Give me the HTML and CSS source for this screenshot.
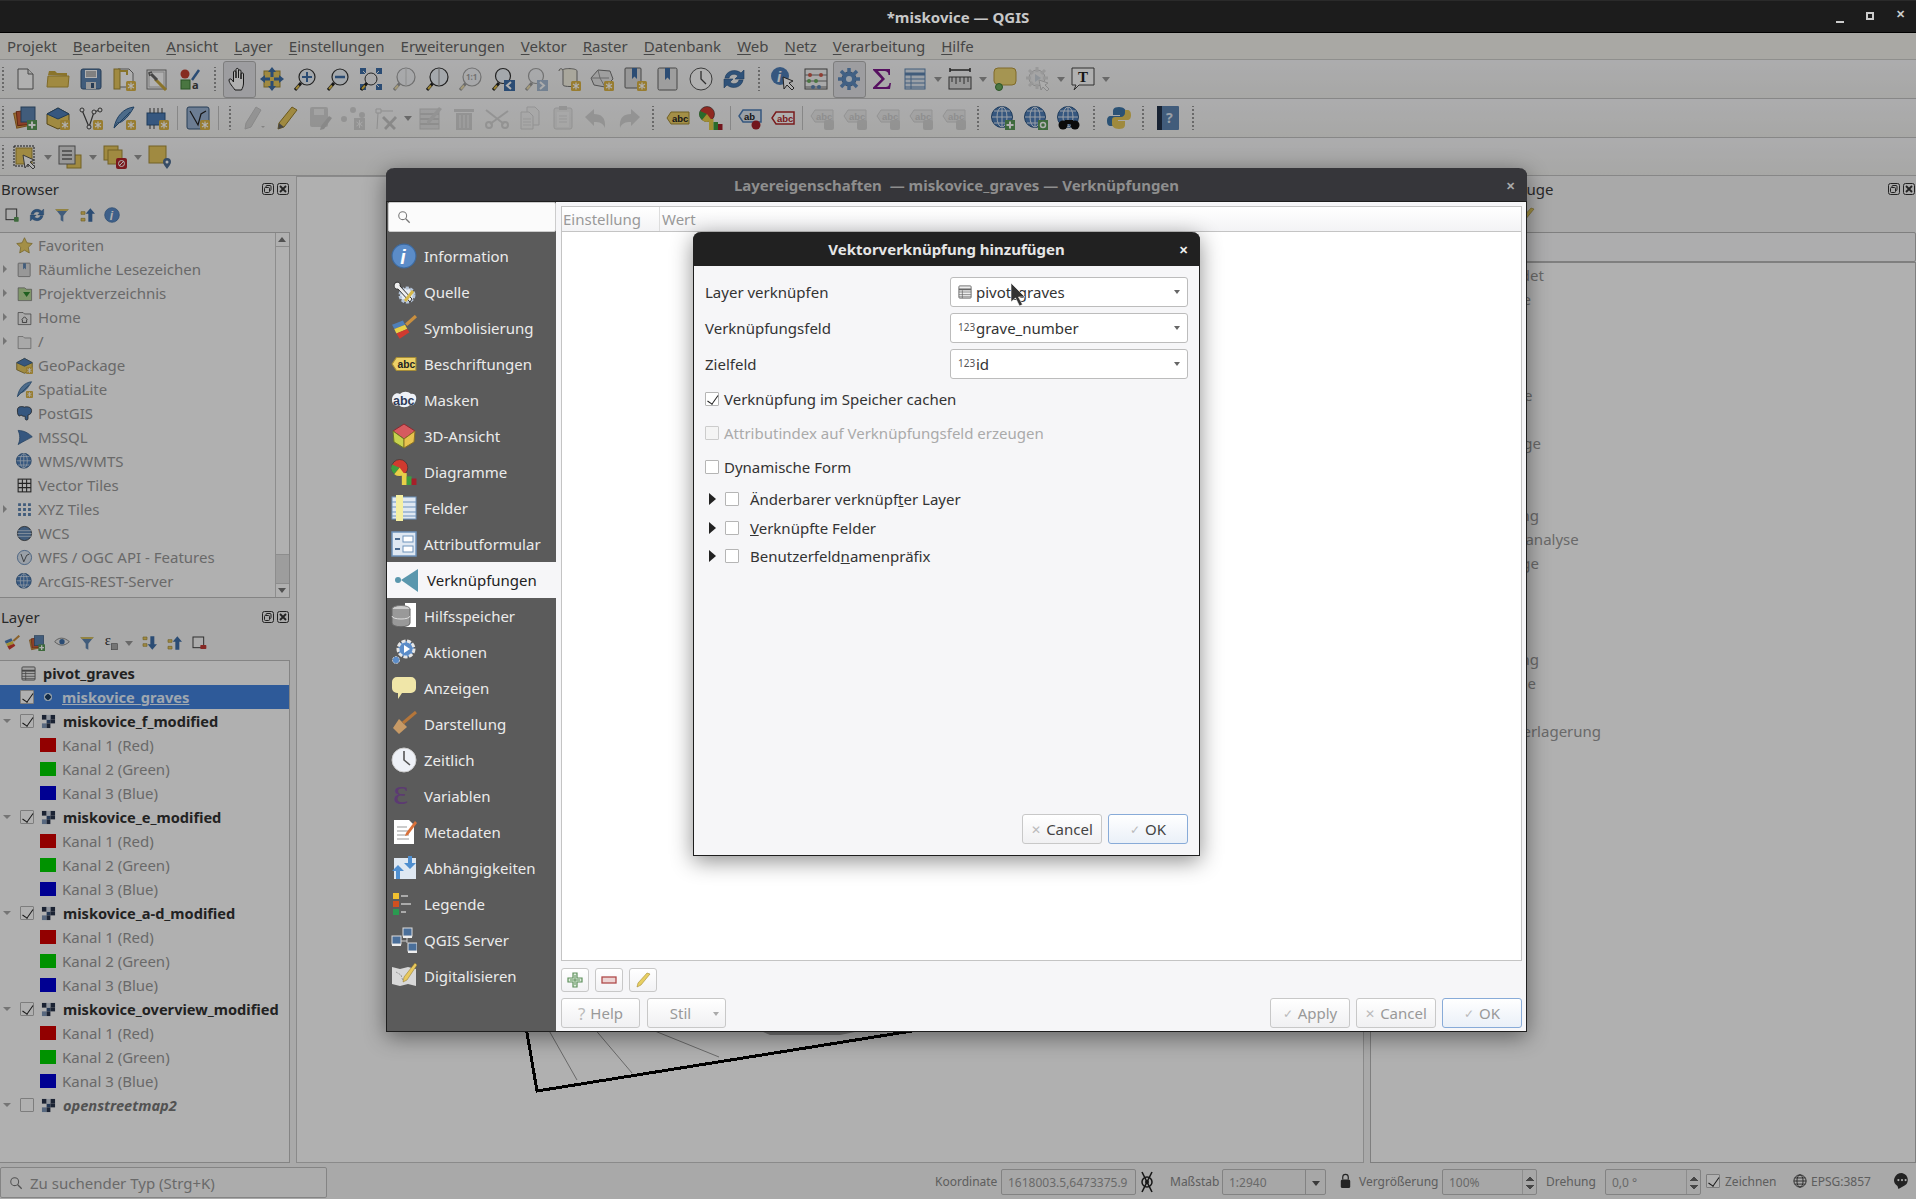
FILE: index.html
```html
<!DOCTYPE html>
<html lang="de">
<head>
    <meta charset="UTF-8">
    <title>*miskovice — QGIS</title>
    <link rel="stylesheet" href="styles.css">
</head>
<body>
<svg class="defs" width="0" height="0">
    <defs>
        <g id="badge"><rect x="14" y="14" width="10" height="10" rx="1.5" fill="#dcb546"/><path d="M19 15.5v7M16 17l6 4M22 17l-6 4" stroke="#fff" stroke-width="1.2"/></g>
        <g id="handle"><path d="M2 23l6-7" stroke="#222" stroke-width="3"/><path d="M3 22l3-3.5" stroke="#e2c04e" stroke-width="2"/></g>
        <symbol id="i-new" viewBox="0 0 24 24"><path d="M5 2h10l5 5v15H5z" fill="#fff" stroke="#666"/><path d="M15 2v5h5" fill="#eee" stroke="#666"/></symbol>
        <symbol id="i-open" viewBox="0 0 24 24"><path d="M2 8l1-4h6l2 2h10v3z" fill="#c9a83f"/><path d="M1 20l1-11h21l-1 11z" fill="#e8c95f" stroke="#b89a3c"/></symbol>
        <symbol id="i-save" viewBox="0 0 24 24"><rect x="2" y="2" width="20" height="20" rx="2" fill="#5f86b3" stroke="#39587c"/><rect x="6" y="3" width="12" height="8" fill="#fff"/><path d="M7 5h10M7 7h10M7 9h10" stroke="#777"/><rect x="7" y="15" width="10" height="7" fill="#ddd"/><rect x="12" y="16" width="3" height="5" fill="#39587c"/></symbol>
        <symbol id="i-layout" viewBox="0 0 24 24"><path d="M6 2h11l4 4v14H6z" fill="#fff" stroke="#777"/><rect x="2" y="2" width="6" height="20" fill="#e8c95f" stroke="#a58c36"/><path d="M8 4h7v4" fill="none" stroke="#c6a93f" stroke-width="2"/><use href="#badge"/></symbol>
        <symbol id="i-manager" viewBox="0 0 24 24"><rect x="2" y="3" width="19" height="19" fill="#fff" stroke="#777"/><rect x="4" y="5" width="15" height="15" fill="none" stroke="#bbb"/><path d="M10 12l11 11" stroke="#c9a83f" stroke-width="3"/><path d="M6 7l6 6" stroke="#666" stroke-width="3"/><path d="M7 5l-3 1 1 3" fill="none" stroke="#666" stroke-width="1.500"/></symbol>
        <symbol id="i-style" viewBox="0 0 24 24"><circle cx="7" cy="7" r="4.5" fill="#c2402f"/><path d="M14 13l7-10" stroke="#3f6fa8" stroke-width="2.5"/><rect x="3" y="13" width="9" height="9" fill="#6cab5f" stroke="#3c7a36"/><text x="14" y="22" class="svg-t" font-size="11" fill="#444">a</text></symbol>
        <symbol id="i-pan" viewBox="0 0 24 24"><path d="M8 23c-2-3-6-7-6-10 0-1.500 2-1.500 3 0l1.500 2V5c0-1.500 2.500-1.500 2.500 0v6V2.500c0-1.500 2.500-1.500 2.500 0V11V4c0-1.500 2.500-1.500 2.500 0v8V7c0-1.500 2.500-1.500 2.500 0v9c0 3-1 5-2 7z" fill="#fff" stroke="#222"/></symbol>
        <symbol id="i-panmap" viewBox="0 0 24 24"><rect x="4" y="4" width="16" height="16" fill="#e8c95f" stroke="#a58c36"/><path d="M12 0l4 5h-2.500v5h-3V5H8zM12 24l4-5h-2.500v-5h-3v5H8zM0 12l5-4v2.500h5v3H5V16zM24 12l-5-4v2.500h-5v3h5V16z" fill="#3f6fa8"/></symbol>
        <symbol id="i-zoomin" viewBox="0 0 24 24"><use href="#handle"/><circle cx="14" cy="10" r="8" fill="#eef3f9" stroke="#333" stroke-width="1.200"/><path d="M14 5v10M9 10h10" stroke="#3f6fa8" stroke-width="2"/></symbol>
        <symbol id="i-zoomout" viewBox="0 0 24 24"><use href="#handle"/><circle cx="14" cy="10" r="8" fill="#eef3f9" stroke="#333" stroke-width="1.200"/><path d="M9 10h10" stroke="#3f6fa8" stroke-width="2.500"/></symbol>
        <symbol id="i-zoomfull" viewBox="0 0 24 24"><rect x="1" y="1" width="22" height="22" fill="#3f6fa8"/><rect x="7" y="0" width="10" height="24" fill="#f5f5f7"/><rect x="0" y="7" width="24" height="10" fill="#f5f5f7"/><path d="M4 4l6 6M20 4l-6 6M20 20l-6-6" stroke="#f5f5f7"/><use href="#handle"/><circle cx="12" cy="12" r="6" fill="none" stroke="#333"/></symbol>
        <symbol id="i-zoomplain" viewBox="0 0 24 24"><use href="#handle"/><circle cx="14" cy="10" r="9" fill="#eef3f9" stroke="#333" stroke-width="1.200"/><path d="M14 1v18" stroke="#999"/></symbol>
        <symbol id="i-zoom11" viewBox="0 0 24 24"><use href="#handle"/><circle cx="14" cy="10" r="9" fill="#eef3f9" stroke="#333" stroke-width="1.200"/><text x="8" y="13" class="svg-t" font-size="8" fill="#333">1:1</text></symbol>
        <symbol id="i-zoomlast" viewBox="0 0 24 24"><use href="#handle"/><circle cx="12" cy="9" r="7.500" fill="#eef3f9" stroke="#333" stroke-width="1.200"/><rect x="13" y="13" width="11" height="11" fill="#3f6fa8"/><path d="M20 15l-4 3.500 4 3.500" fill="none" stroke="#fff" stroke-width="2"/></symbol>
        <symbol id="i-zoomnext" viewBox="0 0 24 24"><use href="#handle"/><circle cx="12" cy="9" r="7.500" fill="#eef3f9" stroke="#333" stroke-width="1.200"/><rect x="13" y="13" width="11" height="11" fill="#3f6fa8"/><path d="M16 15l4 3.500-4 3.500" fill="none" stroke="#fff" stroke-width="2"/></symbol>
        <symbol id="i-newmap" viewBox="0 0 24 24"><path d="M2 4c0-3 4-3 4 0v14c0 2 14 2 14 0V4c0-3-14-3-14-1" fill="#f5f2e2" stroke="#777"/><use href="#badge"/></symbol>
        <symbol id="i-new3d" viewBox="0 0 24 24"><path d="M1 11l7-8 12 1 3 8-8 8-11-2z" fill="#e6e6e6" stroke="#777"/><path d="M8 3l2 8-9 0M10 11l9 0M10 11l5 9" stroke="#999" fill="none"/><use href="#badge"/></symbol>
        <symbol id="i-booknew" viewBox="0 0 24 24"><rect x="2" y="1" width="16" height="20" rx="1" fill="#ddd" stroke="#666"/><path d="M9 1h5v11l-2.500-2.500L9 12z" fill="#3f6fa8"/><use href="#badge"/></symbol>
        <symbol id="i-book" viewBox="0 0 24 24"><rect x="2" y="1" width="19" height="22" rx="1.500" fill="#e5e5e5" stroke="#666"/><path d="M9 1h5v12l-2.500-2.500L9 13z" fill="#3f6fa8"/></symbol>
        <symbol id="i-clock" viewBox="0 0 24 24"><circle cx="12" cy="12" r="11" fill="#fff" stroke="#555"/><path d="M12 4v8l5 5" fill="none" stroke="#444" stroke-width="1.300"/></symbol>
        <symbol id="i-refresh" viewBox="0 0 24 24"><path d="M3 11C4 4 13 1 19 6l3-3v9h-9l3-3c-3-3-8-2-9 2zM21 13c-1 7-10 10-16 5l-3 3v-9h9l-3 3c3 3 8 2 9-2z" fill="#4477b0" stroke="#2d5684" stroke-width=".6"/></symbol>
        <symbol id="i-identify" viewBox="0 0 24 24"><circle cx="9" cy="9" r="9" fill="#4f7fb8"/><text x="6" y="15" class="svg-b" font-size="15" fill="#fff" font-style="italic">i</text><path d="M12 10l1 12 3-4 5 5 2-2-5-5 4-2z" fill="#fff" stroke="#333"/></symbol>
        <symbol id="i-abacus" viewBox="0 0 24 24"><rect x="1" y="2" width="22" height="20" fill="#f5f5f5" stroke="#555"/><path d="M1 8h22M1 14h22M1 20h22" stroke="#777"/><g fill="#d05b4a"><circle cx="6" cy="8" r="2"/><circle cx="17" cy="8" r="2"/></g><g fill="#6cab5f"><circle cx="5" cy="14" r="2"/><circle cx="12" cy="14" r="2"/></g><g fill="#5f86b3"><circle cx="9" cy="20" r="2"/><circle cx="15" cy="20" r="2"/></g></symbol>
        <symbol id="i-gear" viewBox="0 0 24 24"><circle cx="12" cy="12" r="7" fill="#5f8cc0" stroke="#3a628f"/><path d="M12 1v22M1 12h22M4 4l16 16M20 4L4 20" stroke="#5f8cc0" stroke-width="3.500"/><circle cx="12" cy="12" r="6" fill="#5f8cc0"/><circle cx="12" cy="12" r="3" fill="#dfe8f2"/></symbol>
        <symbol id="i-sigma" viewBox="0 0 24 24"><path d="M3 2h17v6h-1.500c0-3-2-4-4-4H8l7 8-8 8h8c3 0 4-1 4.500-4H21l-1 6H3v-1.500l8.500-8.500L3 3z" fill="#7d1a8c"/></symbol>
        <symbol id="i-table" viewBox="0 0 24 24"><rect x="2" y="2" width="20" height="20" fill="#dfe8f2" stroke="#5f86b3"/><path d="M2 7h20" stroke="#5f86b3" stroke-width="3"/><path d="M2 12h20M2 16h20M2 20h20M8 8v14" stroke="#5f86b3"/></symbol>
        <symbol id="i-ruler" viewBox="0 0 24 24"><path d="M2 3h20M2 1v4M22 1v4" stroke="#333" stroke-width="1.500" fill="none"/><rect x="1" y="10" width="22" height="12" fill="#ddd" stroke="#444"/><path d="M4 10v5M8 10v7M12 10v5M16 10v7M20 10v5" stroke="#444"/></symbol>
        <symbol id="i-balloon" viewBox="0 0 24 24"><path d="M5 1h14a4 4 0 014 4v9a4 4 0 01-4 4H9l-4 4v-4.500A4 4 0 011 14V5a4 4 0 014-4z" fill="#f0d878" stroke="#b89a3c"/><circle cx="6" cy="20" r="3.500" fill="#6cab5f" stroke="#3c7a36"/></symbol>
        <symbol id="i-gearplay" viewBox="0 0 24 24"><circle cx="11" cy="11" r="8" fill="#ddd" stroke="#888"/><path d="M11 0v22M0 11h22M3 3l16 16M19 3L3 19" stroke="#bbb" stroke-width="3"/><circle cx="11" cy="11" r="6" fill="#e5e5e5"/><path d="M9 7l6 4-6 4z" fill="#9ab"/><path d="M13 13l2 10 2-3 4 4 2-2-4-4 3-2z" fill="#fff" stroke="#888"/></symbol>
        <symbol id="i-textbox" viewBox="0 0 24 24"><path d="M1 1h22v17H8l-5 5 2-5H1z" fill="#fff" stroke="#444"/><text x="7" y="15" class="svg-s" font-size="15" fill="#222">T</text></symbol>
        <symbol id="i-addlayers" viewBox="0 0 24 24"><rect x="2" y="6" width="12" height="15" fill="#dca24e" stroke="#a86c23" transform="rotate(-12 8 13)"/><rect x="4" y="5" width="12" height="14" fill="#cc5f3b" stroke="#8c3a1c" transform="rotate(-6 10 12)"/><rect x="8" y="1" width="14" height="15" fill="#5f86b3" stroke="#39587c"/><rect x="14" y="14" width="10" height="10" fill="#5a9a57"/><path d="M19 15.500v7M15.500 19h7" stroke="#fff" stroke-width="2"/></symbol>
        <symbol id="i-gpkg" viewBox="0 0 24 24"><path d="M1 8l11-6 11 6v10l-11 5-11-5z" fill="#e8c95f" stroke="#7a6420"/><path d="M1 8l11 5 11-5-11-6z" fill="#4f7fb8" stroke="#2d5684"/><use href="#badge"/></symbol>
        <symbol id="i-vnodes" viewBox="0 0 24 24"><path d="M3 4l7 17 5-15 6-2" fill="none" stroke="#444" stroke-width="1.200"/><g fill="#fff" stroke="#444"><circle cx="3" cy="4" r="2"/><circle cx="10" cy="21" r="2"/><circle cx="15" cy="6" r="2"/><circle cx="21" cy="4" r="2"/></g><use href="#badge"/></symbol>
        <symbol id="i-feather" viewBox="0 0 24 24"><path d="M22 1C12 2 4 10 2 22c2-1 2-3 3-5 6 0 12-7 17-16z" fill="#6f9bc9" stroke="#2f5d8c"/><path d="M2 22L18 6" stroke="#2f5d8c"/><use href="#badge"/></symbol>
        <symbol id="i-chip" viewBox="0 0 24 24"><rect x="2" y="7" width="18" height="12" fill="#4f7fb8" stroke="#2d5684"/><path d="M5 2v5M9 2v5M13 2v5M17 2v5M5 19v4M9 19v4" stroke="#444"/><use href="#badge"/></symbol>
        <symbol id="i-vbox" viewBox="0 0 24 24"><rect x="1" y="1" width="22" height="22" rx="2" fill="#9db6d6" stroke="#39587c"/><path d="M4 5l8 14 3-11 5-3" fill="none" stroke="#222" stroke-width="1.200"/><use href="#badge"/></symbol>
        <symbol id="i-pencil" viewBox="0 0 24 24"><path d="M17 1l5 3L9 21l-6 2 1-6z" fill="#e8c95f" stroke="#9a802c"/><path d="M3 23l1-6 5 4z" fill="#666"/></symbol>
        <symbol id="i-pencilgray" viewBox="0 0 24 24"><path d="M14 1l5 3-10 17-6 2 1-6z" fill="#aaa" stroke="#888"/><path d="M19 20l2 2 2-2z" fill="#777"/></symbol>
        <symbol id="i-savegray" viewBox="0 0 24 24"><rect x="2" y="1" width="18" height="20" rx="2" fill="#aaa"/><rect x="6" y="3" width="10" height="6" fill="#ddd"/><path d="M21 10l3 2-8 11-4 1 1-4z" fill="#888"/></symbol>
        <symbol id="i-nodes" viewBox="0 0 24 24"><circle cx="3" cy="13" r="3" fill="#aaa"/><circle cx="12" cy="4" r="3" fill="#aaa"/><circle cx="21" cy="9" r="3" fill="#aaa"/><rect x="13" y="12" width="11" height="12" fill="#aaa"/><path d="M18.500 14v8M15.500 16l6 4M21.500 16l-6 4" stroke="#eee"/></symbol>
        <symbol id="i-tools" viewBox="0 0 24 24"><path d="M2 3h5v4H2zM7 5h12M4 7l-1 16" fill="none" stroke="#999"/><path d="M10 22l11-12 2 2-11 12M10 10l12 12-2 2-12-12" fill="#888"/></symbol>
        <symbol id="i-tableedit" viewBox="0 0 24 24"><rect x="1" y="3" width="19" height="20" fill="#ccc" stroke="#999"/><path d="M1 8h19M1 13h19M1 18h19" stroke="#999" stroke-width="2"/><path d="M20 1l3 2-12 14-3 1 0-3z" fill="#aaa"/></symbol>
        <symbol id="i-trash" viewBox="0 0 24 24"><path d="M2 3h20v3H2zM4 7h16v17H4z" fill="#aaa"/><path d="M8 9v13M12 9v13M16 9v13" stroke="#eee"/></symbol>
        <symbol id="i-scissors" viewBox="0 0 24 24"><path d="M1 4l18 14M23 5L5 18" stroke="#aaa" stroke-width="2"/><circle cx="4" cy="19" r="3" fill="none" stroke="#aaa" stroke-width="2"/><circle cx="20" cy="19" r="3" fill="none" stroke="#aaa" stroke-width="2"/></symbol>
        <symbol id="i-copy" viewBox="0 0 24 24"><path d="M9 1h8l4 4v14H9z" fill="#eee" stroke="#aaa"/><path d="M3 6h8l4 4v13H3z" fill="#eee" stroke="#aaa"/><path d="M5 13h8M5 16h8M5 19h8" stroke="#bbb"/></symbol>
        <symbol id="i-paste" viewBox="0 0 24 24"><rect x="3" y="2" width="18" height="21" rx="2" fill="#ddd" stroke="#aaa"/><rect x="8" y="0" width="8" height="4" fill="#aaa"/><rect x="6" y="6" width="12" height="15" fill="#eee"/><path d="M8 10h8M8 13h8M8 16h8" stroke="#bbb"/></symbol>
        <symbol id="i-undo" viewBox="0 0 24 24"><path d="M1 11l9-8v5c7 0 12 3 11 14-2-5-5-6-11-6v4z" fill="#aaa"/></symbol>
        <symbol id="i-redo" viewBox="0 0 24 24"><path d="M23 11l-9-8v5C7 8 2 11 3 22c2-5 5-6 11-6v4z" fill="#aaa"/></symbol>
        <symbol id="i-abc" viewBox="0 0 24 24"><path d="M5 6h18v12H5l-4-6z" fill="#ecd067" stroke="#a58c36"/><text x="6" y="15.500" class="svg-b" font-size="9.500" fill="#222">abc</text></symbol>
        <symbol id="i-abcred" viewBox="0 0 24 24"><path d="M5 6h18v12H5l-4-6z" fill="#fff" stroke="#b0282a" stroke-width="1.500"/><text x="6" y="15.500" class="svg-b" font-size="9.500" fill="#b0282a">abc</text></symbol>
        <symbol id="i-abpin" viewBox="0 0 24 24"><path d="M5 4h18v12H5l-4-6z" fill="#dfe8f2" stroke="#4f7fb8" stroke-width="1.500"/><text x="6" y="13.500" class="svg-b" font-size="9.500" fill="#222">ab</text><circle cx="18" cy="19" r="4.500" fill="#a5202a"/></symbol>
        <symbol id="i-abcgray" viewBox="0 0 24 24"><path d="M5 4h18v12H5l-4-6z" fill="#ddd" stroke="#aaa"/><text x="6" y="13.500" class="svg-b" font-size="9.500" fill="#999">abc</text><rect x="14" y="14" width="10" height="10" rx="2" fill="#aaa"/></symbol>
        <symbol id="i-pie" viewBox="0 0 24 24"><circle cx="8" cy="8" r="7.500" fill="#d03a2f" stroke="#333" stroke-width=".6"/><path d="M8 8L1 5a7.500 7.500 0 002 9z" fill="#3d9c3f"/><path d="M8 8l-5 6a7.500 7.500 0 009.500 0z" fill="#e8d048"/><rect x="10" y="13" width="4.500" height="11" fill="#e8d048"/><rect x="14.500" y="16" width="4.500" height="8" fill="#3d9c3f"/><rect x="19" y="18" width="4.500" height="6" fill="#a5202a"/></symbol>
        <symbol id="i-globe" viewBox="0 0 24 24"><circle cx="11" cy="11" r="10.500" fill="#4f7fb8" stroke="#2d5684"/><path d="M11 1v20M1 11h20M3 5h16M3 17h16" stroke="#dfe8f2"/><ellipse cx="11" cy="11" rx="5" ry="10" fill="none" stroke="#dfe8f2"/></symbol>
        <symbol id="i-globeplus" viewBox="0 0 24 24"><use href="#i-globe"/><rect x="14" y="14" width="10" height="10" fill="#5a9a57"/><path d="M19 15.500v7M15.500 19h7" stroke="#fff" stroke-width="2"/></symbol>
        <symbol id="i-globeq" viewBox="0 0 24 24"><use href="#i-globe"/><rect x="14" y="14" width="10" height="10" fill="#5a9a57"/><circle cx="19" cy="19" r="2.500" fill="none" stroke="#fff" stroke-width="1.500"/></symbol>
        <symbol id="i-globebin" viewBox="0 0 24 24"><use href="#i-globe"/><circle cx="6" cy="19" r="4.500" fill="#111"/><circle cx="18" cy="19" r="4.500" fill="#111"/><rect x="8" y="14" width="8" height="4" fill="#111"/></symbol>
        <symbol id="i-python" viewBox="0 0 24 24"><path d="M12 1C6 1 6 4 6 6v3h7v1H4c-3 0-4 2-4 5s1 5 4 5h2v-3c0-2 2-4 4-4h6c2 0 3-1 3-3V6c0-2-2-5-7-5z" fill="#3f78aa"/><path d="M12 23c6 0 6-3 6-5v-3h-7v-1h9c3 0 4-2 4-5s-1-5-4-5h-2v3c0 2-2 4-4 4H8c-2 0-3 1-3 3v4c0 2 2 5 7 5z" fill="#e6c85a"/></symbol>
        <symbol id="i-helpbook" viewBox="0 0 24 24"><rect x="1" y="0" width="22" height="24" rx="1" fill="#5f86b3"/><rect x="1" y="0" width="5" height="24" fill="#24344a"/><text x="10" y="17" class="svg-t" font-size="14" fill="#dfe8f2">?</text></symbol>
        <symbol id="i-select" viewBox="0 0 24 24"><rect x="3" y="3" width="16" height="16" fill="#e8c95f" stroke="#a58c36"/><rect x="1" y="1" width="20" height="20" fill="none" stroke="#222" stroke-dasharray="2 1"/><path d="M10 10l2 13 3-4 5 5 2-2-5-5 4-2z" fill="#fff" stroke="#555"/></symbol>
        <symbol id="i-formsel" viewBox="0 0 24 24"><rect x="9" y="10" width="14" height="13" fill="#e8c95f" stroke="#a58c36"/><rect x="1" y="1" width="16" height="18" fill="#ddd" stroke="#666"/><path d="M4 6h10M4 10h10M4 14h10" stroke="#666" stroke-width="1.500"/></symbol>
        <symbol id="i-deselect" viewBox="0 0 24 24"><rect x="1" y="1" width="14" height="14" fill="#e8c95f" stroke="#a58c36"/><rect x="5" y="5" width="14" height="14" fill="#e8c95f" stroke="#a58c36"/><rect x="13" y="13" width="11" height="11" rx="2" fill="#b3242a"/><circle cx="18.500" cy="18.500" r="3" fill="none" stroke="#fff"/><path d="M16 21l5-5" stroke="#fff"/></symbol>
        <symbol id="i-locate" viewBox="0 0 24 24"><rect x="1" y="1" width="17" height="17" fill="#e8c95f" stroke="#a58c36"/><path d="M19 24c-2-3-4-5-4-7a4 4 0 018 0c0 2-2 4-4 7z" fill="#4f6f94"/><circle cx="19" cy="17" r="1.500" fill="#fff"/></symbol>
        <symbol id="i-addgroup" viewBox="0 0 24 24"><rect x="3" y="3" width="16" height="16" fill="#fff" fill-opacity=".3" stroke="#444" stroke-width="1.500"/><rect x="15" y="15" width="7" height="7" rx="1" fill="#5a9a57"/></symbol>
        <symbol id="i-removegroup" viewBox="0 0 24 24"><rect x="3" y="3" width="16" height="16" fill="#fff" fill-opacity=".3" stroke="#444" stroke-width="1.500"/><rect x="14" y="15" width="9" height="6" rx="1" fill="#c23a35"/></symbol>
        <symbol id="i-filter" viewBox="0 0 24 24"><path d="M2 3h20l-8 10v9l-4-2v-7z" fill="#5f86b3"/><path d="M2 3h20l-2 3H4z" fill="#d6c062"/></symbol>
        <symbol id="i-collapse" viewBox="0 0 24 24"><path d="M3 7h6v4H3zM3 17h6v4H3z" fill="#e8c95f" stroke="#a58c36"/><path d="M17 2l7 8h-4v12h-6V10h-4z" fill="#3f6fa8"/></symbol>
        <symbol id="i-expand" viewBox="0 0 24 24"><path d="M3 3h6v4H3zM3 13h6v4H3z" fill="#e8c95f" stroke="#a58c36"/><path d="M17 22l7-8h-4V2h-6v12h-4z" fill="#3f6fa8"/></symbol>
        <symbol id="i-info" viewBox="0 0 24 24"><circle cx="12" cy="12" r="11" fill="#5b8cc8" stroke="#3d6a9f"/><text x="8.500" y="19" class="svg-b" font-size="18" fill="#fff" font-style="italic">i</text></symbol>
        <symbol id="i-brushmix" viewBox="0 0 24 24"><path d="M1 9l10-4 2 4-10 4z" fill="#4f7fb8"/><path d="M3 13l10-4 2 4-10 4z" fill="#e8d048"/><path d="M5 17l10-4 2 3-9 6z" fill="#d03a2f"/><path d="M14 9l9-8" stroke="#c98f3f" stroke-width="3"/></symbol>
        <symbol id="i-eye" viewBox="0 0 24 24"><path d="M1 10c6-7 14-7 22 0-7 7-15 7-22 0z" fill="#eee" stroke="#555"/><circle cx="12" cy="10" r="4" fill="#3f6fa8"/></symbol>
        <symbol id="i-epsilonbox" viewBox="0 0 24 24"><text x="1" y="15" class="svg-s" font-size="22" fill="#333">ε</text><rect x="11" y="13" width="9" height="9" fill="#aaa" stroke="#666"/></symbol>
        <symbol id="i-star" viewBox="0 0 24 24"><path d="M12 1l3.400 7.200 7.600 1-5.600 5.400 1.400 7.900-6.800-3.800-6.800 3.800 1.400-7.900L1 9.200l7.600-1z" fill="#ecd067" stroke="#a58c36"/></symbol>
        <symbol id="i-bmark" viewBox="0 0 24 24"><rect x="3" y="3" width="17" height="19" rx="1" fill="#ddd" stroke="#777"/><path d="M10 3h4v9l-2-2-2 2z" fill="#5f86b3"/></symbol>
        <symbol id="i-folderfav" viewBox="0 0 24 24"><path d="M3 4h9l3 2h7v16H3z" fill="#b9d99a" stroke="#777"/><path d="M10 10h10l-5 7z" fill="#2f8c2f"/></symbol>
        <symbol id="i-home" viewBox="0 0 24 24"><path d="M3 5h7l2 2h9v15H3z" fill="#f5f5f5" stroke="#555"/><path d="M8 15l4-4 4 4M9 15v4h6v-4" fill="none" stroke="#222"/></symbol>
        <symbol id="i-folder" viewBox="0 0 24 24"><path d="M3 5h7l2 2h9v15H3z" fill="#f5f5f5" stroke="#888"/></symbol>
        <symbol id="i-pg" viewBox="0 0 24 24"><path d="M2 7c0-6 8-5 10-4 2-1 10-1 10 5 0 5-4 6-5 6v5c0 3-4 3-4 0v-3c-2 0-4 0-6-2-1 2-3 2-4 0-1-2-1-4-1-7z" fill="#4f7fb8" stroke="#222"/></symbol>
        <symbol id="i-mssql" viewBox="0 0 24 24"><path d="M3 22c3-6 3-14 0-20 8 0 15 4 20 9-5 3-12 6-20 11z" fill="#4f7fb8" stroke="#2d5684"/></symbol>
        <symbol id="i-grid" viewBox="0 0 24 24"><rect x="3" y="3" width="18" height="18" fill="#fff" stroke="#333" stroke-width="1.500"/><path d="M3 9h18M3 15h18M9 3v18M15 3v18" stroke="#333" stroke-width="1.500"/></symbol>
        <symbol id="i-dots" viewBox="0 0 24 24"><path d="M3 3h4v4H3zM10 3h4v4h-4zM17 3h4v4h-4zM3 10h4v4H3zM10 10h4v4h-4zM17 10h4v4h-4zM3 17h4v4H3zM10 17h4v4h-4zM17 17h4v4h-4z" fill="#5f86b3"/></symbol>
        <symbol id="i-wcs" viewBox="0 0 24 24"><circle cx="12" cy="12" r="10" fill="#5f86b3" stroke="#222"/><path d="M2 8h20M2 12h20M2 16h20" stroke="#dfe8f2"/></symbol>
        <symbol id="i-wfs" viewBox="0 0 24 24"><circle cx="12" cy="12" r="10" fill="#dfe8f2" stroke="#3f6fa8"/><path d="M7 7l4 11 4-9 4-2" fill="none" stroke="#222"/></symbol>
        <symbol id="i-raster" viewBox="0 0 16 16"><rect x="1" y="1" width="5" height="5" fill="#28344a"/><rect x="10" y="1" width="5" height="5" fill="#28344a"/><rect x="6" y="6" width="4" height="4" fill="#33507a"/><rect x="1" y="10" width="5" height="5" fill="#7f97b8"/><rect x="6" y="1" width="4" height="5" fill="#cfd8e4"/><rect x="10" y="6" width="5" height="4" fill="#28344a"/><rect x="6" y="10" width="4" height="5" fill="#28344a"/></symbol>
        <symbol id="i-attrtable" viewBox="0 0 16 16"><rect x="1" y="1" width="14" height="14" rx="1" fill="#eee" stroke="#666"/><path d="M1 5h14" stroke="#666" stroke-width="2"/><path d="M1 8h14M1 11h14M1 13.500h14M5 6v9" stroke="#666" stroke-width=".8"/></symbol>
        <symbol id="i-wrench" viewBox="0 0 26 26"><circle cx="16" cy="16" r="7" fill="#e8edf4" stroke="#b5c5da" stroke-width="3" stroke-dasharray="3 1.500"/><path d="M4 4c3-2 6 0 5 3l12 13-2 3L7 10C4 11 2 7 4 4z" fill="#eee" stroke="#333"/><path d="M14 22L22 12" stroke="#d6b84a" stroke-width="3"/></symbol>
        <symbol id="i-masks" viewBox="0 0 26 26"><path d="M1 13c0-6 5-8 8-6 3-3 8-3 11 0 4-1 6 3 5 6s-2 6-6 5c-3 3-9 3-11 0-4 2-7-1-7-5z" fill="#eef1f7"/><text x="2" y="18" class="svg-b" font-size="12.500" fill="#2d3b57">abc</text></symbol>
        <symbol id="i-cube" viewBox="0 0 26 26"><path d="M13 1l11 7-11 8L2 8z" fill="#d65a5f" stroke="#8c2a2f"/><path d="M2 8l11 8v9L3 19z" fill="#c7d24f" stroke="#6c7426"/><path d="M24 8l-11 8v9l10-6z" fill="#e8c24e" stroke="#8a7224"/></symbol>
        <symbol id="i-fields" viewBox="0 0 26 26"><rect x="1" y="2" width="24" height="22" fill="#dfe8f2" stroke="#6f93bb"/><path d="M1 7h24M1 12h24M1 17h24M1 21h24" stroke="#6f93bb"/><rect x="5" y="0" width="7" height="26" fill="#f5efa0"/></symbol>
        <symbol id="i-form" viewBox="0 0 26 26"><rect x="1" y="1" width="24" height="24" fill="#dfe8f2" stroke="#6f93bb" stroke-width="1.500"/><rect x="12" y="5" width="10" height="6" fill="#fff" stroke="#6f93bb"/><rect x="12" y="15" width="10" height="6" fill="#fff" stroke="#6f93bb"/><path d="M4 8h5M4 18h5" stroke="#4a6a8f" stroke-width="2"/></symbol>
        <symbol id="i-join" viewBox="0 0 26 26"><circle cx="5" cy="13" r="3" fill="#5a97ad"/><path d="M8 13L25 2v23z" fill="#5a97ad"/></symbol>
        <symbol id="i-aux" viewBox="0 0 26 26"><rect x="14" y="0" width="11" height="24" fill="#fff"/><ellipse cx="10" cy="6" rx="9" ry="3.500" fill="#ccc" stroke="#777"/><path d="M1 6v14c0 5 18 5 18 0V6" fill="#999" stroke="#666"/><path d="M1 13c0 4 18 4 18 0" fill="none" stroke="#ddd"/></symbol>
        <symbol id="i-actions" viewBox="0 0 26 26"><circle cx="15" cy="10" r="8" fill="#5b8cc8" stroke="#e6e6e6" stroke-width="3" stroke-dasharray="4 1.500"/><path d="M13 6l6 4-6 4z" fill="#fff"/><circle cx="5" cy="21" r="3.500" fill="#5b8cc8" stroke="#ccc" stroke-dasharray="2 1"/></symbol>
        <symbol id="i-tip" viewBox="0 0 26 26"><path d="M6 2h14a5 5 0 015 5v6a5 5 0 01-5 5h-9l-4 6v-6H6a5 5 0 01-5-5V7a5 5 0 015-5z" fill="#f0e6a8"/></symbol>
        <symbol id="i-brush" viewBox="0 0 26 26"><path d="M8 8l8 8-8 7-6-6z" fill="#c79a66"/><path d="M12 12L25 1" stroke="#b5763a" stroke-width="3"/></symbol>
        <symbol id="i-clocklight" viewBox="0 0 26 26"><circle cx="13" cy="13" r="12" fill="#eef1f7" stroke="#ccc"/><path d="M13 4v9l6 5" fill="none" stroke="#555" stroke-width="1.600"/></symbol>
        <symbol id="i-variables" viewBox="0 0 26 26"><text x="2" y="21" class="svg-s" font-size="36" fill="#5c3a72">ε</text></symbol>
        <symbol id="i-meta" viewBox="0 0 26 26"><path d="M3 1h15l5 5v19H3z" fill="#fff"/><path d="M6 8h10M6 12h12M6 16h12M6 20h12" stroke="#999"/><path d="M24 2l2 2-9 12-3 1 1-3z" fill="#d9713a"/></symbol>
        <symbol id="i-deps" viewBox="0 0 26 26"><rect x="3" y="3" width="22" height="21" fill="#dfe8f2"/><path d="M1 16l6-6 6 6h-4v8H5v-8zM25 8l-6 6-6-6h4V1h4v7z" fill="#4f8fd0"/></symbol>
        <symbol id="i-legend" viewBox="0 0 26 26"><rect x="2" y="2" width="6" height="6" fill="#f0c030"/><rect x="2" y="10" width="6" height="6" fill="#d0501f"/><rect x="2" y="18" width="6" height="6" fill="#2a9a50"/><path d="M10 5h7M10 13h10M10 21h5" stroke="#aaa" stroke-width="2"/></symbol>
        <symbol id="i-server" viewBox="0 0 26 26"><g fill="#4a6f9a" stroke="#ddd"><rect x="1" y="9" width="9" height="8"/><rect x="12" y="1" width="9" height="8"/><rect x="17" y="16" width="9" height="8"/></g><path d="M1 18h9M12 10h9M17 25h9" stroke="#eee" stroke-width="2"/><path d="M16 11v5M10 14h6" stroke="#ccc"/></symbol>
        <symbol id="i-digit" viewBox="0 0 26 26"><path d="M1 4l8 2 8-2 8 2v17l-8-2-8 2-8-2z" fill="#d8d8d8"/><path d="M5 9l5 3 2 6" stroke="#999" fill="none" stroke-dasharray="2 1"/><path d="M24 0l2 2-10 15-4 2 1-5z" fill="#e8c95f" stroke="#8a7224" stroke-width=".5"/></symbol>
        <symbol id="i-search" viewBox="0 0 16 16"><circle cx="6.500" cy="6.500" r="4.500" fill="none" stroke="#777" stroke-width="1.200"/><path d="M10 10l4.500 4.500" stroke="#777" stroke-width="1.500"/></symbol>
        <symbol id="i-plus" viewBox="0 0 16 16"><path d="M6 1h4v5h5v4h-5v5H6v-5H1V6h5z" fill="#dfeedd" stroke="#5e8f5c" stroke-width="1.200"/><path d="M8 3v10M3 8h10" stroke="#5e8f5c"/></symbol>
        <symbol id="i-minus" viewBox="0 0 16 16"><rect x="1" y="5" width="14" height="6" fill="#ecd4d4" stroke="#b04a4a" stroke-width="1.300"/></symbol>
        <symbol id="i-pen" viewBox="0 0 16 16"><path d="M12 1l3 1-9 11-4 2 1-4z" fill="#e8cf62" stroke="#a58c36" stroke-width=".6"/></symbol>
        <symbol id="i-float" viewBox="0 0 12 12"><rect x=".5" y=".5" width="11" height="11" rx="2" fill="none" stroke="#333"/><rect x="4" y="2.500" width="5" height="5" rx="1" fill="none" stroke="#333"/><rect x="2.500" y="4.500" width="5" height="5" rx="1" fill="#f5f5f5" stroke="#333"/></symbol>
        <symbol id="i-close" viewBox="0 0 12 12"><rect x=".5" y=".5" width="11" height="11" rx="2" fill="none" stroke="#333"/><path d="M3 3l6 6M9 3l-6 6" stroke="#333" stroke-width="1.800"/></symbol>
        <symbol id="i-nocrs" viewBox="0 0 16 24"><path d="M3 2l10 20M13 2L3 22" stroke="#222" stroke-width="1.600"/><circle cx="8" cy="12" r="5" fill="none" stroke="#222" stroke-width="1.500"/><circle cx="8" cy="12" r="2" fill="#222"/></symbol>
        <symbol id="i-lock" viewBox="0 0 14 20"><rect x="1" y="8" width="12" height="11" rx="2" fill="#333"/><path d="M3.500 8V5a3.500 3.500 0 017 0v3" fill="none" stroke="#333" stroke-width="1.500"/></symbol>
        <symbol id="i-crs" viewBox="0 0 16 16"><circle cx="8" cy="8" r="7" fill="none" stroke="#333"/><ellipse cx="8" cy="8" rx="3.500" ry="7" fill="none" stroke="#333"/><path d="M1 8h14M2 4.500h12M2 11.500h12" stroke="#333"/></symbol>
        <symbol id="i-msg" viewBox="0 0 20 20"><path d="M10 1a9 8 0 00-5 14.500L6 19l5-3a9 8 0 00-1-15z" fill="#333"/><circle cx="6" cy="9" r="1.200" fill="#fff"/><circle cx="10" cy="9" r="1.200" fill="#fff"/><circle cx="14" cy="9" r="1.200" fill="#fff"/></symbol>
    </defs>
</svg>

<div class="titlebar">
    <span class="title-text">*miskovice — QGIS</span>
    <div class="win-btns">
        <span class="win-min"></span>
        <span class="win-max"></span>
        <span class="win-close">✕</span>
    </div>
</div>

<div class="main">
    <div class="menubar">
        <span>Projekt</span><span><u>B</u>earbeiten</span><span><u>A</u>nsicht</span><span><u>L</u>ayer</span><span><u>E</u>instellungen</span><span>Er<u>w</u>eiterungen</span><span><u>V</u>ektor</span><span><u>R</u>aster</span><span><u>D</u>atenbank</span><span><u>W</u>eb</span><span><u>N</u>etz</span><span><u>V</u>erarbeitung</span><span><u>H</u>ilfe</span>
    </div>

    <div class="toolbar">
        <i class="grip first"></i>
        <b class="tool"><svg><use href="#i-new"/></svg></b>
        <b class="tool"><svg><use href="#i-open"/></svg></b>
        <b class="tool"><svg><use href="#i-save"/></svg></b>
        <b class="tool"><svg><use href="#i-layout"/></svg></b>
        <b class="tool"><svg><use href="#i-manager"/></svg></b>
        <b class="tool"><svg><use href="#i-style"/></svg></b>
        <i class="grip"></i>
        <b class="tool on"><svg><use href="#i-pan"/></svg></b>
        <b class="tool"><svg><use href="#i-panmap"/></svg></b>
        <b class="tool"><svg><use href="#i-zoomin"/></svg></b>
        <b class="tool"><svg><use href="#i-zoomout"/></svg></b>
        <b class="tool"><svg><use href="#i-zoomfull"/></svg></b>
        <b class="tool off"><svg><use href="#i-zoomplain"/></svg></b>
        <b class="tool"><svg><use href="#i-zoomplain"/></svg></b>
        <b class="tool off"><svg><use href="#i-zoom11"/></svg></b>
        <b class="tool"><svg><use href="#i-zoomlast"/></svg></b>
        <b class="tool off"><svg><use href="#i-zoomnext"/></svg></b>
        <b class="tool"><svg><use href="#i-newmap"/></svg></b>
        <b class="tool"><svg><use href="#i-new3d"/></svg></b>
        <b class="tool"><svg><use href="#i-booknew"/></svg></b>
        <b class="tool"><svg><use href="#i-book"/></svg></b>
        <b class="tool"><svg><use href="#i-clock"/></svg></b>
        <b class="tool"><svg><use href="#i-refresh"/></svg></b>
        <i class="grip"></i>
        <b class="tool"><svg><use href="#i-identify"/></svg></b>
        <b class="tool"><svg><use href="#i-abacus"/></svg></b>
        <b class="tool on"><svg><use href="#i-gear"/></svg></b>
        <b class="tool"><svg><use href="#i-sigma"/></svg></b>
        <b class="tool"><svg><use href="#i-table"/></svg></b><i class="drop"></i>
        <b class="tool"><svg><use href="#i-ruler"/></svg></b><i class="drop"></i>
        <b class="tool"><svg><use href="#i-balloon"/></svg></b>
        <b class="tool off"><svg><use href="#i-gearplay"/></svg></b><i class="drop"></i>
        <b class="tool"><svg><use href="#i-textbox"/></svg></b><i class="drop"></i>
    </div>

    <div class="toolbar">
        <i class="grip first"></i>
        <b class="tool"><svg><use href="#i-addlayers"/></svg></b>
        <b class="tool"><svg><use href="#i-gpkg"/></svg></b>
        <b class="tool"><svg><use href="#i-vnodes"/></svg></b>
        <b class="tool"><svg><use href="#i-feather"/></svg></b>
        <b class="tool"><svg><use href="#i-chip"/></svg></b>
        <i class="sep sep-wide"></i>
        <b class="tool"><svg><use href="#i-vbox"/></svg></b>
        <i class="sep sep-wide"></i>
        <i class="grip grip-s"></i>
        <b class="tool off"><svg><use href="#i-pencilgray"/></svg></b>
        <b class="tool"><svg><use href="#i-pencil"/></svg></b>
        <b class="tool off"><svg><use href="#i-savegray"/></svg></b>
        <b class="tool off"><svg><use href="#i-nodes"/></svg></b>
        <b class="tool off"><svg><use href="#i-tools"/></svg></b><i class="drop"></i>
        <b class="tool off"><svg><use href="#i-tableedit"/></svg></b>
        <b class="tool off"><svg><use href="#i-trash"/></svg></b>
        <b class="tool off"><svg><use href="#i-scissors"/></svg></b>
        <b class="tool off"><svg><use href="#i-copy"/></svg></b>
        <b class="tool off"><svg><use href="#i-paste"/></svg></b>
        <b class="tool off"><svg><use href="#i-undo"/></svg></b>
        <b class="tool off"><svg><use href="#i-redo"/></svg></b>
        <i class="grip"></i>
        <b class="tool"><svg><use href="#i-abc"/></svg></b>
        <b class="tool"><svg><use href="#i-pie"/></svg></b>
        <i class="sep"></i>
        <b class="tool"><svg><use href="#i-abpin"/></svg></b>
        <b class="tool"><svg><use href="#i-abcred"/></svg></b>
        <i class="sep"></i>
        <b class="tool off"><svg><use href="#i-abcgray"/></svg></b>
        <b class="tool off"><svg><use href="#i-abcgray"/></svg></b>
        <b class="tool off"><svg><use href="#i-abcgray"/></svg></b>
        <b class="tool off"><svg><use href="#i-abcgray"/></svg></b>
        <b class="tool off"><svg><use href="#i-abcgray"/></svg></b>
        <i class="grip"></i>
        <b class="tool"><svg><use href="#i-globeplus"/></svg></b>
        <b class="tool"><svg><use href="#i-globeq"/></svg></b>
        <b class="tool"><svg><use href="#i-globebin"/></svg></b>
        <i class="grip grip-m"></i>
        <b class="tool"><svg><use href="#i-python"/></svg></b>
        <i class="grip"></i>
        <b class="tool"><svg><use href="#i-helpbook"/></svg></b>
        <i class="grip grip-m"></i>
    </div>

    <div class="toolbar toolbar-last">
        <i class="grip first"></i>
        <b class="tool"><svg><use href="#i-select"/></svg></b><i class="drop"></i>
        <b class="tool"><svg><use href="#i-formsel"/></svg></b><i class="drop"></i>
        <b class="tool"><svg><use href="#i-deselect"/></svg></b><i class="drop"></i>
        <b class="tool"><svg><use href="#i-locate"/></svg></b>
    </div>

    <div class="workspace">
        <div class="dock-left">
            <section class="panel panel-browser">
                <div class="panel-title"><span>Browser</span><span class="panel-btns"><svg><use href="#i-float"/></svg><svg><use href="#i-close"/></svg></span></div>
                <div class="panel-tools">
                    <svg><use href="#i-addgroup"/></svg><svg><use href="#i-refresh"/></svg><svg><use href="#i-filter"/></svg><svg><use href="#i-collapse"/></svg><svg><use href="#i-info"/></svg>
                </div>
                <div class="tree browser-tree">
                    <div class="tree-rows">
                        <div class="row"><i class="arrow none"></i><svg><use href="#i-star"/></svg>Favoriten</div>
                        <div class="row"><i class="arrow"></i><svg><use href="#i-bmark"/></svg>Räumliche Lesezeichen</div>
                        <div class="row"><i class="arrow"></i><svg><use href="#i-folderfav"/></svg>Projektverzeichnis</div>
                        <div class="row"><i class="arrow"></i><svg><use href="#i-home"/></svg>Home</div>
                        <div class="row"><i class="arrow"></i><svg><use href="#i-folder"/></svg>/</div>
                        <div class="row"><i class="arrow none"></i><svg><use href="#i-gpkg"/></svg>GeoPackage</div>
                        <div class="row"><i class="arrow none"></i><svg><use href="#i-feather"/></svg>SpatiaLite</div>
                        <div class="row"><i class="arrow none"></i><svg><use href="#i-pg"/></svg>PostGIS</div>
                        <div class="row"><i class="arrow none"></i><svg><use href="#i-mssql"/></svg>MSSQL</div>
                        <div class="row"><i class="arrow none"></i><svg><use href="#i-globe"/></svg>WMS/WMTS</div>
                        <div class="row"><i class="arrow none"></i><svg><use href="#i-grid"/></svg>Vector Tiles</div>
                        <div class="row"><i class="arrow"></i><svg><use href="#i-dots"/></svg>XYZ Tiles</div>
                        <div class="row"><i class="arrow none"></i><svg><use href="#i-wcs"/></svg>WCS</div>
                        <div class="row"><i class="arrow none"></i><svg><use href="#i-wfs"/></svg>WFS / OGC API - Features</div>
                        <div class="row"><i class="arrow none"></i><svg><use href="#i-globe"/></svg>ArcGIS-REST-Server</div>
                    </div>
                    <div class="scrollbar">
                        <i class="sb-up"></i><i class="sb-track"></i><i class="sb-thumb"></i><i class="sb-down"></i>
                    </div>
                </div>
            </section>
            <section class="panel panel-layers">
                <div class="panel-title"><span>Layer</span><span class="panel-btns"><svg><use href="#i-float"/></svg><svg><use href="#i-close"/></svg></span></div>
                <div class="panel-tools">
                    <svg><use href="#i-brushmix"/></svg><svg><use href="#i-addlayers"/></svg><svg><use href="#i-eye"/></svg><svg><use href="#i-filter"/></svg><svg><use href="#i-epsilonbox"/></svg><i class="drop"></i><svg class="tool-gap"><use href="#i-expand"/></svg><svg><use href="#i-collapse"/></svg><svg><use href="#i-removegroup"/></svg>
                </div>
                <div class="tree layer-tree">
                    <div class="lrow"><i class="exp none"></i><svg class="licon pivot"><use href="#i-attrtable"/></svg><span class="lname">pivot_graves</span></div>
                    <div class="lrow selected"><i class="exp none"></i><i class="check on"></i><i class="point"></i><span class="lname">miskovice_graves</span></div>
                    <div class="lrow"><i class="exp"></i><i class="check on"></i><svg class="licon"><use href="#i-raster"/></svg><span class="lname">miskovice_f_modified</span></div>
                    <div class="lrow sub"><i class="swatch red"></i>Kanal 1 (Red)</div>
                    <div class="lrow sub"><i class="swatch green"></i>Kanal 2 (Green)</div>
                    <div class="lrow sub"><i class="swatch blue"></i>Kanal 3 (Blue)</div>
                    <div class="lrow"><i class="exp"></i><i class="check on"></i><svg class="licon"><use href="#i-raster"/></svg><span class="lname">miskovice_e_modified</span></div>
                    <div class="lrow sub"><i class="swatch red"></i>Kanal 1 (Red)</div>
                    <div class="lrow sub"><i class="swatch green"></i>Kanal 2 (Green)</div>
                    <div class="lrow sub"><i class="swatch blue"></i>Kanal 3 (Blue)</div>
                    <div class="lrow"><i class="exp"></i><i class="check on"></i><svg class="licon"><use href="#i-raster"/></svg><span class="lname">miskovice_a-d_modified</span></div>
                    <div class="lrow sub"><i class="swatch red"></i>Kanal 1 (Red)</div>
                    <div class="lrow sub"><i class="swatch green"></i>Kanal 2 (Green)</div>
                    <div class="lrow sub"><i class="swatch blue"></i>Kanal 3 (Blue)</div>
                    <div class="lrow"><i class="exp"></i><i class="check on"></i><svg class="licon"><use href="#i-raster"/></svg><span class="lname">miskovice_overview_modified</span></div>
                    <div class="lrow sub"><i class="swatch red"></i>Kanal 1 (Red)</div>
                    <div class="lrow sub"><i class="swatch green"></i>Kanal 2 (Green)</div>
                    <div class="lrow sub"><i class="swatch blue"></i>Kanal 3 (Blue)</div>
                    <div class="lrow"><i class="exp"></i><i class="check"></i><svg class="licon"><use href="#i-raster"/></svg><span class="lname lname-off">openstreetmap2</span></div>
                </div>
            </section>
        </div>

        <div class="canvas">
            <svg class="map-extent" width="700" height="950">
                <path d="M250 850l30 53M296 850l39 46M348 850l74 30" fill="none" stroke="#999"/>
                <path d="M455 850h108v4l-20 4h-70z" fill="#aaa"/>
                <path d="M229 850l11 64L646 849" fill="none" stroke="#000" stroke-width="3" shape-rendering="crispEdges"/>
            </svg>
        </div>

        <div class="dock-right">
            <div class="panel-title"><span class="proc-title">Verarbeitungswerkzeuge</span><span class="panel-btns"><svg><use href="#i-float"/></svg><svg><use href="#i-close"/></svg></span></div>
            <div class="panel-tools proc-tools"><svg><use href="#i-pen"/></svg></div>
            <div class="proc-search"></div>
            <div class="proc-tree">
                <div class="proc-row">Zuletzt verwendet</div>
                <div class="proc-row">Dateiwerkzeuge</div>
                <div class="proc-row"></div>
                <div class="proc-row"></div>
                <div class="proc-row"></div>
                <div class="proc-row">Layerwerkzeuge</div>
                <div class="proc-row"></div>
                <div class="proc-row">Kartenwerkzeuge</div>
                <div class="proc-row"></div>
                <div class="proc-row"></div>
                <div class="proc-row">Datenverwaltung</div>
                <div class="proc-row">Raster-Geländeanalyse</div>
                <div class="proc-row">Rasterwerkzeuge</div>
                <div class="proc-row"></div>
                <div class="proc-row"></div>
                <div class="proc-row">Vektoranschein</div>
                <div class="proc-row">Vektorerzeugung</div>
                <div class="proc-row">Vektorgeometrie</div>
                <div class="proc-row"></div>
                <div class="proc-row">Vektorlayer-Überlagerung</div>
            </div>
        </div>
    </div>

    <div class="statusbar">
        <div class="locator"><svg><use href="#i-search"/></svg><span>Zu suchender Typ (Strg+K)</span></div>
        <div class="status-items">
            <span class="st-coord-label">Koordinate</span>
            <span class="st-field st-coord">1618003.5,6473375.9</span>
            <svg class="st-nocrs"><use href="#i-nocrs"/></svg>
            <span class="st-scale-label">Maßstab</span>
            <span class="st-field st-scale">1:2940<i class="st-combo-arrow"></i></span>
            <svg class="st-lock"><use href="#i-lock"/></svg>
            <span class="st-mag-label">Vergrößerung</span>
            <span class="st-field st-mag">100%<i class="st-spin"></i></span>
            <span class="st-rot-label">Drehung</span>
            <span class="st-field st-rot">0,0 °<i class="st-spin"></i></span>
            <i class="check on st-check"></i>
            <span class="st-render">Zeichnen</span>
            <svg class="st-crs"><use href="#i-crs"/></svg>
            <span class="st-epsg">EPSG:3857</span>
            <svg class="st-msg"><use href="#i-msg"/></svg>
        </div>
    </div>
</div>

<div class="dim"></div>

<div class="dialog props">
    <div class="dialog-title props-title"><span>Layereigenschaften &nbsp;— miskovice_graves — Verknüpfungen</span><span class="dialog-x">✕</span></div>
    <div class="props-body">
        <aside class="nav">
            <div class="nav-search"><svg><use href="#i-search"/></svg></div>
            <div class="nav-list">
                <div class="nav-item"><svg><use href="#i-info"/></svg>Information</div>
                <div class="nav-item"><svg><use href="#i-wrench"/></svg>Quelle</div>
                <div class="nav-item"><svg><use href="#i-brushmix"/></svg>Symbolisierung</div>
                <div class="nav-item"><svg><use href="#i-abc"/></svg>Beschriftungen</div>
                <div class="nav-item"><svg><use href="#i-masks"/></svg>Masken</div>
                <div class="nav-item"><svg><use href="#i-cube"/></svg>3D-Ansicht</div>
                <div class="nav-item"><svg><use href="#i-pie"/></svg>Diagramme</div>
                <div class="nav-item"><svg><use href="#i-fields"/></svg>Felder</div>
                <div class="nav-item"><svg><use href="#i-form"/></svg>Attributformular</div>
                <div class="nav-item active"><svg><use href="#i-join"/></svg>Verknüpfungen</div>
                <div class="nav-item"><svg><use href="#i-aux"/></svg>Hilfsspeicher</div>
                <div class="nav-item"><svg><use href="#i-actions"/></svg>Aktionen</div>
                <div class="nav-item"><svg><use href="#i-tip"/></svg>Anzeigen</div>
                <div class="nav-item"><svg><use href="#i-brush"/></svg>Darstellung</div>
                <div class="nav-item"><svg><use href="#i-clocklight"/></svg>Zeitlich</div>
                <div class="nav-item"><svg><use href="#i-variables"/></svg>Variablen</div>
                <div class="nav-item"><svg><use href="#i-meta"/></svg>Metadaten</div>
                <div class="nav-item"><svg><use href="#i-deps"/></svg>Abhängigkeiten</div>
                <div class="nav-item"><svg><use href="#i-legend"/></svg>Legende</div>
                <div class="nav-item"><svg><use href="#i-server"/></svg>QGIS Server</div>
                <div class="nav-item"><svg><use href="#i-digit"/></svg>Digitalisieren</div>
            </div>
        </aside>
        <div class="props-content">
            <div class="joins-table">
                <div class="joins-head"><span class="col-a">Einstellung</span><span class="col-b">Wert</span></div>
            </div>
            <div class="joins-tools">
                <span class="mini-btn"><svg><use href="#i-plus"/></svg></span>
                <span class="mini-btn"><svg><use href="#i-minus"/></svg></span>
                <span class="mini-btn"><svg><use href="#i-pen"/></svg></span>
            </div>
            <div class="props-footer">
                <span class="btn btn-off btn-help"><em>?</em>Help</span>
                <span class="btn btn-off btn-style">Stil<i class="mini-arrow"></i></span>
                <span class="footer-gap"></span>
                <span class="btn btn-off"><em>✓</em>Apply</span>
                <span class="btn btn-off"><em>✕</em>Cancel</span>
                <span class="btn btn-off btn-default"><em>✓</em>OK</span>
            </div>
        </div>
    </div>
</div>

<div class="dialog joindlg">
    <div class="dialog-title join-title"><span>Vektorverknüpfung hinzufügen</span><span class="dialog-x">✕</span></div>
    <div class="join-body">
        <div class="join-grid">
            <label>Layer verknüpfen</label>
            <div class="combo"><svg class="combo-ico"><use href="#i-attrtable"/></svg>pivot_graves<i class="combo-arrow"></i></div>
            <label>Verknüpfungsfeld</label>
            <div class="combo"><small>123</small>grave_number<i class="combo-arrow"></i></div>
            <label>Zielfeld</label>
            <div class="combo"><small>123</small>id<i class="combo-arrow"></i></div>
        </div>
        <div class="opt opt-first"><i class="check on"></i>Verknüpfung im Speicher cachen</div>
        <div class="opt opt-off"><i class="check"></i>Attributindex auf Verknüpfungsfeld erzeugen</div>
        <div class="opt"><i class="check"></i>Dynamische Form</div>
        <div class="groups">
            <div class="group"><i class="tri"></i><i class="check"></i><span>Änderbarer verknüpf<u>t</u>er Layer</span></div>
            <div class="group"><i class="tri"></i><i class="check"></i><span><u>V</u>erknüpfte Felder</span></div>
            <div class="group"><i class="tri"></i><i class="check"></i><span>Benutzerfeld<u>n</u>amenpräfix</span></div>
        </div>
        <div class="join-footer">
            <span class="btn"><em>✕</em>Cancel</span>
            <span class="btn btn-default"><em>✓</em>OK</span>
        </div>
    </div>
</div>

<svg class="cursor" width="16" height="24" viewBox="0 0 16 24"><path d="M1 0v19l4.500-4 4 8 3-1.500-4-7.500H15z" fill="#333" stroke="#fff" stroke-width=".6"/></svg>
</body>
</html>
```

FILE: styles.css
```css
* {
    box-sizing: border-box;
}
html, body {
    margin: 0;
    height: 100%;
}
body {
    position: relative;
    width: 1916px;
    height: 1199px;
    overflow: hidden;
    font-family: "Noto Sans", sans-serif;
    font-size: 15px;
    color: #323232;
    background: #f5f5f5;
    display: flex;
    flex-direction: column;
}
svg {
    display: block;
    flex: none;
}
i, em {
    font-style: normal;
}
.defs {
    position: absolute;
}
.svg-t {
    font-family: "Noto Sans", sans-serif;
}
.svg-b {
    font-family: "Liberation Sans", sans-serif;
    font-weight: 700;
}
.svg-s {
    font-family: "Liberation Serif", serif;
}

/* window title */
.titlebar {
    height: 33px;
    flex: none;
    background: #1c1c1c;
    border-top: 1px solid #2a2a2a;
    border-bottom: 1px solid #000;
    color: #c8c8c8;
    font-weight: 700;
    display: flex;
    align-items: center;
    justify-content: center;
    position: relative;
}
.win-btns {
    position: absolute;
    right: 0;
    top: 0;
    bottom: 0;
    color: #ccc;
}
.win-min {
    position: absolute;
    right: 72px;
    top: 20px;
    width: 8px;
    height: 2px;
    background: #ccc;
}
.win-max {
    position: absolute;
    right: 42px;
    top: 11px;
    width: 8px;
    height: 8px;
    border: 2px solid #ccc;
}
.win-close {
    position: absolute;
    right: 11px;
    top: 5px;
    font-size: 11px;
    font-weight: 700;
}

/* main window */
.main {
    flex: 1;
    display: flex;
    flex-direction: column;
    min-height: 0;
}
.menubar {
    height: 27px;
    flex: none;
    padding-left: 7px;
    display: flex;
    gap: 16px;
    align-items: center;
    background: #f5f4ee;
    border-bottom: 1px solid #d0d0cc;
    color: #666;
}
.menubar u {
    text-underline-offset: 2px;
}
.toolbar {
    height: 39px;
    flex: none;
    display: flex;
    align-items: center;
    background: linear-gradient(#fafafc, #f2f2f0);
    border-bottom: 1px solid #c4c4c4;
}
.toolbar-last {
    height: 38px;
}
.tool {
    width: 33px;
    height: 36px;
    flex: none;
    display: flex;
    align-items: center;
    justify-content: center;
    border-radius: 3px;
    border: 1px solid transparent;
}
.tool svg {
    width: 24px;
    height: 24px;
}
.tool.on {
    width: 33px;
    height: 37px;
    background: #e4e4e8;
    border-color: #b5b5b5;
}
.tool.off svg {
    opacity: .42;
}
.grip {
    width: 16px;
    height: 24px;
    flex: none;
    background: radial-gradient(circle, #999 .8px, transparent 1px) center / 4px 4px repeat-y;
}
.grip.first {
    width: 8.500px;
    background-position: left 1px center;
}
.grip-s {
    width: 14.500px;
}
.grip-m {
    width: 17px;
}
.sep {
    width: 6px;
    height: 24px;
    flex: none;
    position: relative;
}
.sep::after {
    content: "";
    position: absolute;
    left: 3px;
    top: 0;
    bottom: 0;
    border-left: 1px solid #c4c4c4;
}
.sep-wide {
    width: 8px;
}
.drop {
    width: 12px;
    height: 12px;
    flex: none;
    position: relative;
}
.drop::after {
    content: "";
    position: absolute;
    left: 2px;
    top: 4px;
    border: 4px solid transparent;
    border-top: 5px solid #999;
    border-bottom: 0;
}

.workspace {
    flex: 1;
    min-height: 0;
    display: flex;
}
.dock-left {
    width: 296px;
    flex: none;
    padding-right: 6px;
    display: flex;
    flex-direction: column;
}
.panel {
    display: flex;
    flex-direction: column;
}
.panel-browser {
    height: 428px;
}
.panel-layers {
    flex: 1;
    min-height: 0;
}
.panel-title {
    height: 26px;
    flex: none;
    display: flex;
    align-items: center;
    justify-content: space-between;
    padding: 0 0 0 1px;
    color: #3c3c3c;
}
.panel-btns {
    display: flex;
    gap: 3px;
    margin-right: 1px;
}
.panel-btns svg {
    width: 12px;
    height: 12px;
}
.panel-tools {
    height: 30px;
    flex: none;
    display: flex;
    align-items: center;
    gap: 9px;
    padding: 0 0 4px 4px;
}
.panel-tools svg {
    width: 16px;
    height: 16px;
}
.panel-tools .drop {
    margin: 0 -3px 0 -6px;
}
.tree {
    flex: 1;
    min-height: 0;
    border: 1px solid #bfbfbf;
    border-left: 0;
    background: #fff;
}
.browser-tree {
    display: flex;
    margin-bottom: 6px;
}
.tree-rows {
    flex: 1;
    overflow: hidden;
    color: #999;
}
.row {
    height: 24px;
    display: flex;
    align-items: center;
    white-space: nowrap;
}
.row svg {
    width: 17px;
    height: 17px;
    margin-right: 5px;
}
.arrow {
    width: 16px;
    flex: none;
    height: 8px;
    position: relative;
}
.arrow::after {
    content: "";
    position: absolute;
    left: 3px;
    top: 0;
    border: 4px solid transparent;
    border-left: 4px solid #aaa;
    border-right: 0;
}
.arrow.none::after {
    display: none;
}
.scrollbar {
    width: 14px;
    flex: none;
    display: flex;
    flex-direction: column;
    border-left: 1px solid #ccc;
}
.sb-up, .sb-down {
    height: 14px;
    flex: none;
    position: relative;
    border-bottom: 1px solid #ccc;
}
.sb-down {
    border-bottom: 0;
    border-top: 1px solid #ccc;
}
.sb-up::after, .sb-down::after {
    content: "";
    position: absolute;
    left: 2px;
    top: 4px;
    border: 4px solid transparent;
    border-top: 0;
    border-bottom: 5px solid #777;
}
.sb-down::after {
    border-bottom: 0;
    border-top: 5px solid #777;
}
.sb-track {
    flex: 1;
}
.sb-thumb {
    height: 29px;
    flex: none;
    background: #e4e4e4;
    border-top: 1px solid #ccc;
}
.layer-tree {
    color: #999;
    overflow: hidden;
}
.lrow {
    height: 24px;
    display: flex;
    align-items: center;
    white-space: nowrap;
}
.exp {
    width: 20px;
    flex: none;
    height: 6px;
    position: relative;
}
.exp::after {
    content: "";
    position: absolute;
    left: 3px;
    top: 1px;
    border: 4px solid transparent;
    border-top: 4px solid #aaa;
    border-bottom: 0;
}
.exp.none::after {
    display: none;
}
.check {
    width: 14px;
    height: 14px;
    flex: none;
    display: block;
    position: relative;
    background: #fff;
    border: 1px solid #b5b5b5;
    border-radius: 1px;
}
.check.on::after {
    content: "";
    position: absolute;
    left: 4px;
    top: 0;
    width: 4.500px;
    height: 9.500px;
    border: solid #222;
    border-width: 0 1.600px 1.600px 0;
    transform: rotate(35deg);
}
.licon {
    width: 15px;
    height: 15px;
    margin: 0 7px;
}
.licon.pivot {
    margin: 0 7px 0 1px;
}
.point {
    width: 16px;
    height: 8px;
    margin: 0 6px;
    flex: none;
    background: radial-gradient(circle at center, #1d3f63 0 2.500px, #c9dcef 3px 4px, transparent 4.500px);
}
.lname {
    color: #323232;
    font-weight: 700;
    font-size: 14.600px;
}
.lname-off {
    color: #777;
    font-style: italic;
}
.selected {
    background: #4383de;
}
.selected .lname {
    color: #e6f2ff;
    text-decoration: underline;
}
.sub {
    padding-left: 40px;
}
.swatch {
    width: 16px;
    height: 14px;
    flex: none;
    margin-right: 6px;
}
.red { background: #d40000; }
.green { background: #00d400; }
.blue { background: #0000d4; }

.canvas {
    width: 1068px;
    flex: none;
    position: relative;
    overflow: hidden;
    background: #fff;
    border: 1px solid #c8c8c8;
}
.map-extent {
    position: absolute;
    left: 0;
    top: 0;
}
.dock-right {
    flex: 1;
    min-width: 0;
    margin-left: 6px;
    display: flex;
    flex-direction: column;
}
.proc-title {
    margin-left: 6px;
}
.proc-tools {
    padding-left: 149px;
}
.proc-search {
    height: 30px;
    flex: none;
    background: #fbfbfc;
    border: 1px solid #b8b8b8;
    border-radius: 2px;
}
.proc-tree {
    flex: 1;
    min-height: 0;
    background: #fff;
    border: 1px solid #b8b8b8;
    padding: 0 0 0 46px;
    color: #999;
}
.proc-row {
    height: 24px;
    display: flex;
    align-items: center;
    white-space: nowrap;
}

.statusbar {
    height: 36px;
    flex: none;
    display: flex;
    align-items: center;
    background: #f5f5f5;
    color: #888;
    font-size: 12px;
    position: relative;
}
.locator {
    width: 327px;
    height: 31px;
    flex: none;
    margin-top: 3px;
    display: flex;
    align-items: center;
    gap: 7px;
    padding-left: 8px;
    border: 1px solid #c0c0c0;
    border-radius: 2px;
    background: #fafafa;
    font-size: 15px;
    color: #999;
}
.locator svg {
    width: 14px;
    height: 14px;
}
.status-items {
    flex: 1;
    height: 100%;
    position: relative;
}
.status-items > * {
    position: absolute;
}
.st-coord-label { left: 608px; top: 10px; }
.st-coord { left: 674px; width: 135px; }
.st-nocrs { left: 812px; top: 7px; width: 16px; height: 24px; }
.st-scale-label { left: 843px; top: 10px; }
.st-scale { left: 895px; width: 104px; top: 5px; height: 28px; }
.st-lock { left: 1013px; top: 9px; width: 11px; height: 18px; }
.st-mag-label { left: 1032px; top: 10px; }
.st-mag { left: 1115px; width: 95px; }
.st-rot-label { left: 1219px; top: 10px; }
.st-rot { left: 1278px; width: 96px; }
.st-check { left: 1379px; top: 11px; }
.st-render { left: 1398px; top: 10px; }
.st-crs { left: 1466px; top: 11px; width: 14px; height: 14px; }
.st-epsg { left: 1484px; top: 10px; }
.st-msg { left: 1566px; top: 9px; width: 18px; height: 18px; }
.st-field {
    top: 6px;
    height: 26px;
    display: flex;
    align-items: center;
    padding-left: 6px;
    border: 1px solid #bdbdbd;
    border-radius: 2px;
    background: #f2f2f2;
    color: #999;
}
.st-combo-arrow {
    position: absolute;
    right: 0;
    top: 0;
    bottom: 0;
    width: 20px;
    border-left: 1px solid #bdbdbd;
}
.st-combo-arrow::after {
    content: "";
    position: absolute;
    left: 6px;
    top: 11px;
    border: 4px solid transparent;
    border-top: 5px solid #555;
    border-bottom: 0;
}
.st-spin {
    position: absolute;
    right: 0;
    top: 0;
    bottom: 0;
    width: 14px;
    border-left: 1px solid #ccc;
    background:
        linear-gradient(135deg, transparent 50%, #666 50%) 3px 6px / 4px 5px no-repeat,
        linear-gradient(225deg, transparent 50%, #666 50%) 7px 6px / 4px 5px no-repeat,
        linear-gradient(45deg, transparent 50%, #666 50%) 3px 15px / 4px 5px no-repeat,
        linear-gradient(315deg, transparent 50%, #666 50%) 7px 15px / 4px 5px no-repeat;
}

.dim {
    position: absolute;
    left: 0;
    right: 0;
    top: 33px;
    bottom: 0;
    background: rgba(0, 0, 0, .31);
}

/* dialogs */
.dialog {
    position: absolute;
    display: flex;
    flex-direction: column;
    background: #f6f6f8;
    border: 1px solid #1e1e1e;
    border-top: 0;
    border-radius: 8px 8px 0 0;
    box-shadow: 0 5px 22px rgba(0, 0, 0, .45);
}
.dialog-title {
    flex: none;
    display: flex;
    align-items: center;
    justify-content: center;
    position: relative;
    font-weight: 700;
    border-radius: 8px 8px 0 0;
    margin: 0 -1px;
}
.dialog-x {
    position: absolute;
    top: 50%;
    transform: translateY(-50%);
    font-size: 11px;
}
.props {
    left: 386px;
    top: 168px;
    width: 1141px;
    height: 864px;
}
.props-title {
    height: 34px;
    background: #36363a;
    border-bottom: 1px solid #1e1e1e;
    color: #8e8e8e;
}
.props-title .dialog-x {
    right: 12px;
    color: #aaa;
}
.props-body {
    flex: 1;
    min-height: 0;
    display: flex;
}
.nav {
    width: 169px;
    flex: none;
    background: #5b5b5b;
    color: #ebebeb;
}
.nav-search {
    height: 30px;
    background: #fbfbfb;
    border: 1px solid #ccc;
    border-radius: 2px;
    margin-left: 1px;
    padding: 7px 0 0 8px;
}
.nav-search svg {
    width: 14px;
    height: 14px;
}
.nav-list {
    padding-top: 6px;
}
.nav-item {
    height: 36px;
    display: flex;
    align-items: center;
    gap: 7px;
    padding-left: 4px;
}
.nav-item svg {
    width: 26px;
    height: 26px;
}
.nav-item.active {
    background: #f6f6f8;
    color: #222;
    gap: 8px;
    padding-left: 6px;
}
.props-content {
    flex: 1;
    min-width: 0;
    display: flex;
    flex-direction: column;
    padding: 4px 4px 4px 5px;
}
.joins-table {
    height: 755px;
    flex: none;
    background: #fff;
    border: 1px solid #c4c4c4;
}
.joins-head {
    height: 25px;
    display: flex;
    align-items: center;
    color: #999;
    background: linear-gradient(#fff, #f3f3f5);
    border-bottom: 1px solid #c4c4c4;
}
.col-a {
    width: 98px;
    padding-left: 1px;
    height: 100%;
    line-height: 25px;
    border-right: 1px solid #ddd;
}
.col-b {
    padding-left: 2px;
}
.joins-tools {
    display: flex;
    gap: 6px;
    margin-top: 7px;
}
.mini-btn {
    width: 28px;
    height: 24px;
    display: flex;
    align-items: center;
    justify-content: center;
    background: linear-gradient(#fff, #f2f2f4);
    border: 1px solid #c8c8c8;
    border-radius: 3px;
}
.mini-btn svg {
    width: 16px;
    height: 16px;
}
.props-footer {
    display: flex;
    gap: 6px;
    margin-top: 6px;
}
.footer-gap {
    flex: 1;
}
.btn {
    width: 80px;
    height: 30px;
    flex: none;
    display: flex;
    align-items: center;
    justify-content: center;
    gap: 5px;
    background: linear-gradient(#fff, #f0f0f2);
    border: 1px solid #c8c8c8;
    border-radius: 3px;
    color: #444;
}
.btn em {
    color: #bbb;
    font-size: 12px;
}
.btn-help em {
    font-size: 17px;
}
.btn-off {
    color: #999;
}
.btn-default {
    border-color: #88abd8;
    background: linear-gradient(#fff, #eaf0f8);
}
.btn-help {
    width: 79px;
}
.btn-style {
    width: 79px;
    margin-left: 1px;
    position: relative;
    padding-right: 12px;
}
.mini-arrow {
    position: absolute;
    right: 6px;
    top: 13px;
    border: 3px solid transparent;
    border-top: 4px solid #aaa;
    border-bottom: 0;
}

.joindlg {
    left: 693px;
    top: 232px;
    width: 507px;
    height: 624px;
}
.join-title {
    height: 34px;
    background: #212121;
    color: #e6e6e6;
}
.join-title .dialog-x {
    right: 12px;
    color: #f0f0f0;
}
.join-body {
    flex: 1;
    display: flex;
    flex-direction: column;
    padding: 11px;
}
.join-grid {
    display: grid;
    grid-template-columns: 245px 238px;
    grid-auto-rows: 30px;
    row-gap: 6px;
    align-items: center;
    color: #333;
}
.combo {
    height: 30px;
    display: flex;
    align-items: center;
    position: relative;
    padding-left: 7px;
    background: #fff;
    border: 1px solid #bcbcbc;
    border-radius: 3px;
    color: #333;
}
.combo small {
    font-size: 10px;
    width: 18px;
    color: #555;
    position: relative;
    top: -1px;
}
.combo-ico {
    width: 14px;
    height: 14px;
    margin-right: 4px;
}
.combo-arrow {
    position: absolute;
    right: 7px;
    top: 12px;
    border: 3.500px solid transparent;
    border-top: 4px solid #666;
    border-bottom: 0;
}
.opt {
    height: 34px;
    display: flex;
    align-items: center;
    gap: 5px;
    color: #333;
}
.opt-first {
    margin-top: 3px;
}
.opt-off {
    color: #aaa;
}
.opt-off .check {
    background: #f4f4f4;
    border-color: #ccc;
}
.groups {
    margin-top: 1px;
}
.group {
    height: 28.500px;
    display: flex;
    align-items: center;
    color: #333;
}
.tri {
    width: 20px;
    height: 12px;
    flex: none;
    position: relative;
}
.tri::after {
    content: "";
    position: absolute;
    left: 4px;
    top: 0;
    border: 6px solid transparent;
    border-left: 7px solid #222;
    border-right: 0;
}
.group span {
    margin-left: 11px;
}
.join-footer {
    margin-top: auto;
    display: flex;
    justify-content: flex-end;
    gap: 6px;
}
.cursor {
    position: absolute;
    left: 1010px;
    top: 283px;
}
```
